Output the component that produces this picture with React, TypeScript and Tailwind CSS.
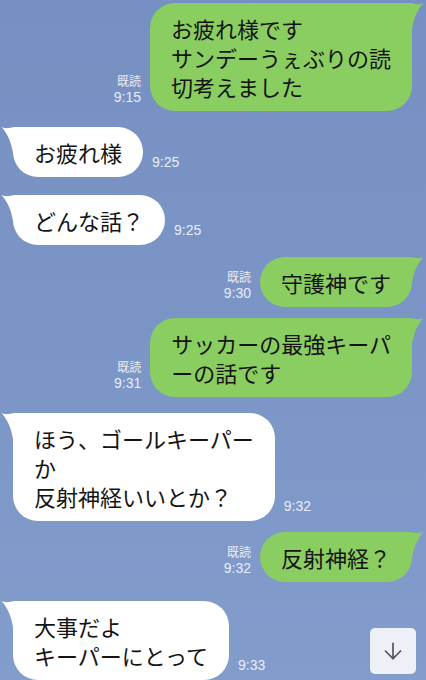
import { ArrowDown } from 'lucide-react';

// one chat message
interface Message {
  id: number;
  mine: boolean;
  lines: string[];
  time: string;
  gap: string;
}

const messages: Message[] = [
  { id: 1, mine: true, lines: ['お疲れ様です', 'サンデーうぇぶりの読', '切考えました'], time: '9:15', gap: 'mt-[3px]' },
  { id: 2, mine: false, lines: ['お疲れ様'], time: '9:25', gap: 'mt-[16px]' },
  { id: 3, mine: false, lines: ['どんな話？'], time: '9:25', gap: 'mt-[18px]' },
  { id: 4, mine: true, lines: ['守護神です'], time: '9:30', gap: 'mt-[12px]' },
  { id: 5, mine: true, lines: ['サッカーの最強キーパ', 'ーの話です'], time: '9:31', gap: 'mt-[11px]' },
  { id: 6, mine: false, lines: ['ほう、ゴールキーパー', 'か', '反射神経いいとか？'], time: '9:32', gap: 'mt-[16px]' },
  { id: 7, mine: true, lines: ['反射神経？'], time: '9:32', gap: 'mt-[11px]' },
  { id: 8, mine: false, lines: ['大事だよ', 'キーパーにとって'], time: '9:33', gap: 'mt-[19px]' },
];

const Tail = ({ mine }: { mine: boolean }) => (
  <svg
    viewBox="0 0 13 26"
    className={
      mine
        ? 'absolute top-0 right-[-12px] w-[13px] h-[26px]'
        : 'absolute top-0 left-[-12px] w-[13px] h-[26px] -scale-x-100'
    }
  >
    <path d="M0 0 C4 1 8 2 12.5 0 C7 6 3 14 1 26 L0 26 Z" fill={mine ? '#8acd61' : '#ffffff'} />
  </svg>
);

const Bubble = ({ msg }: { msg: Message }) => (
  <div
    className={`relative px-[21px] py-[10.5px] text-[22px] leading-[29px] whitespace-nowrap text-[#141414] font-['Noto_Sans_CJK_JP','Noto_Sans',sans-serif] rounded-[25px] ${
      msg.mine ? 'bg-[#8acd61] rounded-tr-none' : 'bg-white rounded-tl-none'
    }`}
  >
    <Tail mine={msg.mine} />
    {msg.lines.map((line, i) => (
      <div key={i}>{line}</div>
    ))}
  </div>
);

const ChatRow = ({ msg }: { msg: Message }) => {
  if (msg.mine) {
    return (
      <div className={`flex justify-end items-end pr-[14px] ${msg.gap}`}>
        <div className="mr-[9px] pb-[6px] text-right text-[#e8edf7]">
          <div className="text-[12px] leading-[16px] font-['Noto_Sans_CJK_JP',sans-serif]">既読</div>
          <div className="text-[14px] leading-[16px] font-['Liberation_Sans',sans-serif]">{msg.time}</div>
        </div>
        <Bubble msg={msg} />
      </div>
    );
  }

  return (
    <div className={`flex items-end pl-[13px] ${msg.gap}`}>
      <Bubble msg={msg} />
      <div className="ml-[9px] pb-[7px] text-[14px] leading-[16px] text-[#e8edf7] font-['Liberation_Sans',sans-serif]">
        {msg.time}
      </div>
    </div>
  );
};

export default function App() {
  return (
    <div className="relative w-[426px] h-[680px] overflow-hidden bg-gradient-to-b from-[#7790c3] via-[#7b95c6] to-[#829dcc]">
      <div className="flex flex-col">
        {messages.map((msg) => (
          <ChatRow key={msg.id} msg={msg} />
        ))}
      </div>

      {/* scroll to bottom */}
      <button className="absolute right-[10px] bottom-[6px] w-[46px] h-[46px] rounded-[5px] bg-[#eef0f7] flex items-center justify-center">
        <ArrowDown className="w-[26px] h-[26px] text-[#55575e]" strokeWidth={1.6} />
      </button>
    </div>
  );
}
